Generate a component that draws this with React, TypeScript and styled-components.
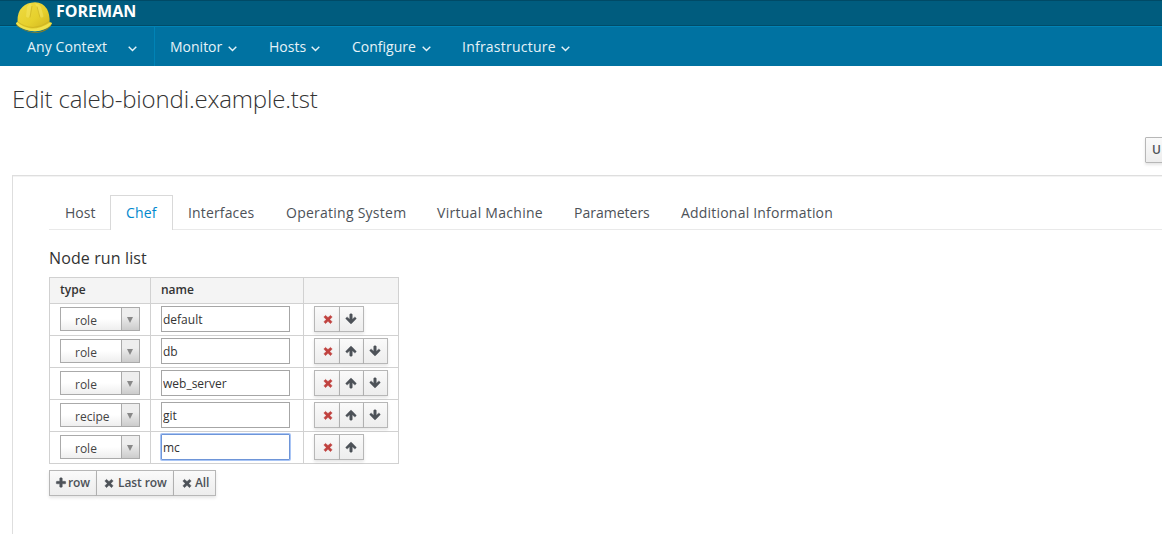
import React from "react";
import styled, { createGlobalStyle, css } from "styled-components";

const GlobalStyle = createGlobalStyle`
  * { box-sizing: border-box; }
  html, body { margin: 0; background: #fff; overflow: hidden; }
  body { font-family: "Open Sans", "Liberation Sans", sans-serif; font-size: 12px; color: #333; }
`;

const Page = styled.div`
  height: 534px;
  display: flex;
  flex-direction: column;
  overflow: hidden;
`;

const Brand = styled.header`
  height: 26px;
  flex: none;
  display: flex;
  background: #005c7e;
  border-top: 1px solid #004a66;
  border-bottom: 1px solid #004c69;
  padding-left: 15px;
`;

const Logo = styled.svg`
  position: relative;
  z-index: 1;
  flex: none;
  width: 38px;
  height: 33px;
`;

const BrandName = styled.div`
  margin-left: 3px;
  font-size: 16px;
  line-height: 20px;
  font-weight: 700;
  color: #fff;
`;

const Nav = styled.nav`
  height: 40px;
  flex: none;
  display: flex;
  background: #0072a1;
  border-top: 1px solid #0083b6;
  color: #e6f3f8;
  font-size: 14px;
  line-height: 40px;
`;

const NavItem = styled.div<{ $width: number; $context?: boolean }>`
  flex: none;
  width: ${(p) => p.$width}px;
  display: flex;
  align-items: center;
  padding-left: ${(p) => (p.$context ? 27 : 15)}px;
  gap: ${(p) => (p.$context ? 21 : 5)}px;
  ${(p) => p.$context && css`border-right: 1px solid #0083b6;`}
`;

const NavLabel = styled.span<{ $width: number; $spacing?: number }>`
  width: ${(p) => p.$width}px;
  letter-spacing: ${(p) => p.$spacing ?? 0}px;
  white-space: nowrap;
`;

const Chevron = styled.svg`
  width: 9px;
  height: 6px;
  margin-top: 4px;
  fill: none;
  stroke: #e6f3f8;
  stroke-width: 1.4;
`;

const Title = styled.h1`
  margin: 16px 0 0 12px;
  font-size: 24px;
  line-height: 34px;
  font-weight: 300;
  letter-spacing: -0.16px;
  color: #333;
`;

const Actions = styled.div`
  display: flex;
  justify-content: flex-end;
  height: 26px;
  margin: 21px -60px 0 0;
`;

const buttonFace = css`
  display: flex;
  align-items: center;
  height: 26px;
  border: 1px solid #b7b7b7;
  background: linear-gradient(#fafafa, #ededed);
  box-shadow: 0 2px 3px rgba(3, 3, 3, 0.1);
  color: #4d5258;
  font-family: inherit;
  font-size: 12px;
  font-weight: 600;
  white-space: nowrap;
`;

const TopButton = styled.button`
  ${buttonFace}
  width: 77px;
  padding: 0 0 1px 6px;
  border-radius: 1px;
`;

const Panel = styled.main`
  flex: 1;
  margin: 12px 0 0 12px;
  padding: 18px 0 0 36px;
  border-left: 1px solid #dedede;
  border-top: 1px solid #dedede;
  box-shadow: inset 0 1px 0 #f3f3f3;
`;

const Tabs = styled.div`
  display: flex;
  height: 36px;
  padding-top: 1px;
  border-bottom: 1px solid #e9e9e9;
`;

const Tab = styled.div<{ $width: number; $active?: boolean; $spacing?: number }>`
  flex: none;
  width: ${(p) => p.$width}px;
  height: 35px;
  padding-left: ${(p) => (p.$active ? 15 : 16)}px;
  border: 1px solid transparent;
  border-width: 1px ${(p) => (p.$active ? 1 : 0)}px 0;
  font-size: 14px;
  line-height: 34px;
  letter-spacing: ${(p) => p.$spacing ?? 0}px;
  white-space: nowrap;
  color: #4d5258;
  ${(p) =>
    p.$active &&
    css`
      color: #0088ce;
      border-color: #d9d9d9;
      background: #fff;
    `}
`;

const Section = styled.h2`
  margin: 16px 0 0;
  height: 31px;
  font-size: 16px;
  line-height: 24px;
  font-weight: 400;
  letter-spacing: 0.12px;
`;

const Table = styled.div`
  width: 350px;
  border: 1px solid #d1d1d1;
  border-width: 1px 0 0 1px;
`;

const Row = styled.div<{ $head?: boolean }>`
  display: grid;
  grid-template-columns: 101px 153px 95px;
  height: ${(p) => (p.$head ? 26 : 32)}px;
  ${(p) => p.$head && css`background: #f4f4f4; font-weight: 600;`}
`;

const Cell = styled.div`
  display: flex;
  align-items: flex-start;
  padding: 2px 0 0 10px;
  border: 1px solid #d1d1d1;
  border-width: 0 1px 1px 0;
`;

const HeadCell = styled(Cell)`
  align-items: center;
  padding: 0 0 2px 10px;
`;

const Select = styled.div`
  display: flex;
  width: 80px;
  height: 24px;
  margin-top: 1px;
  border: 1px solid #aaa;
  background: linear-gradient(#fff 50%, #eee);
  color: #444;
`;

const SelectValue = styled.span`
  width: 60px;
  padding-left: 14px;
  line-height: 26px;
`;

const SelectArrow = styled.span`
  flex: 1;
  display: flex;
  align-items: center;
  justify-content: center;
  padding: 2px 1px 0 0;
  border-left: 1px solid #aaa;
  background: linear-gradient(#eee 35%, #ccc);

  &::before {
    content: "";
    border: 3.5px solid transparent;
    border-top: 6px solid #888;
    border-bottom: 0;
  }
`;

const NameInput = styled.input<{ $focused?: boolean }>`
  width: 129px;
  height: 26px;
  padding: 0 1px;
  border: 1px solid #a6a6a6;
  border-radius: 0;
  outline: 0;
  background: #fff;
  color: #333;
  font: 12px "Open Sans", sans-serif;
  ${(p) =>
    p.$focused &&
    css`
      border-color: #6e95d8;
      box-shadow: 0 0 0 1px #a9c5f5;
      border-radius: 1px;
    `}
`;

const ButtonGroup = styled.div`
  display: flex;
`;

const IconButton = styled.button<{ $first?: boolean }>`
  ${buttonFace}
  justify-content: center;
  width: ${(p) => (p.$first ? 26 : 24)}px;
  padding: ${(p) => (p.$first ? "0 0 0 2px" : "0 1px 0 0")};
  border-left-width: ${(p) => (p.$first ? 1 : 0)}px;
  color: ${(p) => (p.$first ? "#c0423f" : "#4d5258")};
`;

const TextButton = styled.button<{ $width: number; $first?: boolean; $gap: number; $pad: number }>`
  ${buttonFace}
  width: ${(p) => p.$width}px;
  padding: 0 0 1px ${(p) => p.$pad}px;
  gap: ${(p) => p.$gap}px;
  border-left-width: ${(p) => (p.$first ? 1 : 0)}px;
  letter-spacing: -0.1px;
`;

const Footer = styled.div`
  display: flex;
  margin-top: 6px;
`;

const Glyph = styled.svg`
  flex: none;
  width: 12px;
  height: 12px;
  fill: currentColor;
  stroke: currentColor;
  stroke-width: 60;
`;

const glyphs = {
  times:
    "M1490 1322q0 40-28 68l-136 136q-28 28-68 28t-68-28l-294-294-294 294q-28 28-68 28t-68-28l-136-136q-28-28-28-68t28-68l294-294-294-294q-28-28-28-68t28-68l136-136q28-28 68-28t68 28l294 294 294-294q28-28 68-28t68 28l136 136q28 28 28 68t-28 68l-294 294 294 294q28 28 28 68z",
  up: "M1675 971q0 51-37 90l-75 75q-38 38-91 38-54 0-90-38l-294-293v704q0 52-37.5 84.5t-90.5 32.5h-128q-53 0-90.5-32.5t-37.5-84.5v-704l-294 293q-36 38-90 38t-90-38l-75-75q-38-38-38-90 0-53 38-91l651-651q35-37 90-37 54 0 91 37l651 651q37 39 37 91z",
  plus: "M1600 736v192q0 40-28 68t-68 28h-416v416q0 40-28 68t-68 28h-192q-40 0-68-28t-28-68v-416h-416q-40 0-68-28t-28-68v-192q0-40 28-68t68-28h416v-416q0-40 28-68t68-28h192q40 0 68 28t28 68v416h416q40 0 68 28t28 68z",
};

function Icon({ name }: { name: "times" | "up" | "down" | "plus" }) {
  const down = name === "down";
  return (
    <Glyph viewBox="0 0 1792 1792">
      <path
        d={glyphs[down ? "up" : name]}
        transform={down ? "translate(0 1792) scale(1 -1)" : undefined}
      />
    </Glyph>
  );
}

function Helmet() {
  return (
    <Logo viewBox="0 0 38 33">
      <defs>
        <linearGradient id="dome" x1="0" y1="0" x2="1" y2="1">
          <stop offset="0" stopColor="#efdc45" />
          <stop offset="0.55" stopColor="#e6d02c" />
          <stop offset="1" stopColor="#cbae1e" />
        </linearGradient>
      </defs>
      <path d="M1 22.500Q4 27 13 30Q22 33 29 29Q36 26 36.500 22L36 25Q31 31 22 32Q13 32 5 27Q1 25 1 22.500Z" fill="#8f7d1c" />
      <path d="M2.500 21Q2 11 7.500 6Q12 1.500 20 1.200Q28 1.500 32 8Q35 14 34.500 21L37 22Q36 26 29 28.500Q22 31.500 14 29.500Q4 27 1 22.500Z" fill="url(#dome)" />
      <path d="M2 21Q7 26 16 27.500Q25 28 35 21.500L37 22Q34 27 27 29Q20 31.500 12 29Q4 26.500 1 22.500Z" fill="#f1e24c" />
      <path d="M3 21Q9 26 18 26.500Q27 26 34 20.500" fill="none" stroke="#cdb322" strokeWidth="0.8" />
      <path d="M12 6L14.500 2.500Q17 2 16.500 5L14.500 16Q12.500 17.500 11 15.500Z" fill="#f5e868" opacity="0.5" />
      <path d="M20 2.500Q24 2.500 26 6L28.500 15Q28 17.500 25 16L22 7Z" fill="#f5e868" opacity="0.5" />
      <path d="M17 5L15 16.500M22 5.500L25 16.500" fill="none" stroke="#d0b726" strokeWidth="0.8" />
    </Logo>
  );
}

const menus = [
  { label: "Monitor", width: 99, text: 53 },
  { label: "Hosts", width: 83, text: 37 },
  { label: "Configure", width: 110, text: 65 },
  { label: "Infrastructure", width: 130, text: 94, spacing: 0.23 },
];

const tabs = [
  { label: "Host", width: 61 },
  { label: "Chef", width: 63, active: true, spacing: 0.2 },
  { label: "Interfaces", width: 98, inset: true, spacing: 0.15 },
  { label: "Operating System", width: 151, spacing: 0.25 },
  { label: "Virtual Machine", width: 137, spacing: 0.28 },
  { label: "Parameters", width: 107 },
  { label: "Additional Information", width: 190, spacing: 0.2 },
];

const TabOffset = styled.div`
  margin-left: -1px;
`;

const runList = [
  { type: "role", name: "default" },
  { type: "role", name: "db" },
  { type: "role", name: "web_server" },
  { type: "recipe", name: "git" },
  { type: "role", name: "mc" },
];

function Caret() {
  return (
    <Chevron viewBox="0 0 9 6">
      <path d="M.7 .8L4.500 4.600L8.300 .8" />
    </Chevron>
  );
}

export default function App() {
  return (
    <Page>
      <GlobalStyle />
      <Brand>
        <Helmet />
        <BrandName>FOREMAN</BrandName>
      </Brand>
      <Nav>
        <NavItem $width={155} $context>
          <NavLabel $width={80} $spacing={0.1}>
            Any Context
          </NavLabel>
          <Caret />
        </NavItem>
        {menus.map((m) => (
          <NavItem key={m.label} $width={m.width}>
            <NavLabel $width={m.text} $spacing={m.spacing}>
              {m.label}
            </NavLabel>
            <Caret />
          </NavItem>
        ))}
      </Nav>
      <Title>Edit caleb-biondi.example.tst</Title>
      <Actions>
        <TopButton>U</TopButton>
      </Actions>
      <Panel>
        <Tabs>
          {tabs.map((t) => {
            const tab = (
              <Tab key={t.label} $width={t.width} $active={t.active} $spacing={t.spacing}>
                {t.label}
              </Tab>
            );
            return t.inset ? <TabOffset key={t.label}>{tab}</TabOffset> : tab;
          })}
        </Tabs>
        <Section>Node run list</Section>
        <Table>
          <Row $head>
            <HeadCell>type</HeadCell>
            <HeadCell>name</HeadCell>
            <HeadCell />
          </Row>
          {runList.map((item, i) => (
            <Row key={item.name}>
              <Cell>
                <Select>
                  <SelectValue>{item.type}</SelectValue>
                  <SelectArrow />
                </Select>
              </Cell>
              <Cell>
                <NameInput defaultValue={item.name} $focused={i === runList.length - 1} />
              </Cell>
              <Cell>
                <ButtonGroup>
                  <IconButton $first>
                    <Icon name="times" />
                  </IconButton>
                  {i > 0 && (
                    <IconButton>
                      <Icon name="up" />
                    </IconButton>
                  )}
                  {i < runList.length - 1 && (
                    <IconButton>
                      <Icon name="down" />
                    </IconButton>
                  )}
                </ButtonGroup>
              </Cell>
            </Row>
          ))}
        </Table>
        <Footer>
          <TextButton $width={48} $first $pad={5} $gap={1}>
            <Icon name="plus" />
            row
          </TextButton>
          <TextButton $width={77} $pad={6} $gap={3}>
            <Icon name="times" />
            Last row
          </TextButton>
          <TextButton $width={42} $pad={7} $gap={2}>
            <Icon name="times" />
            All
          </TextButton>
        </Footer>
      </Panel>
    </Page>
  );
}
